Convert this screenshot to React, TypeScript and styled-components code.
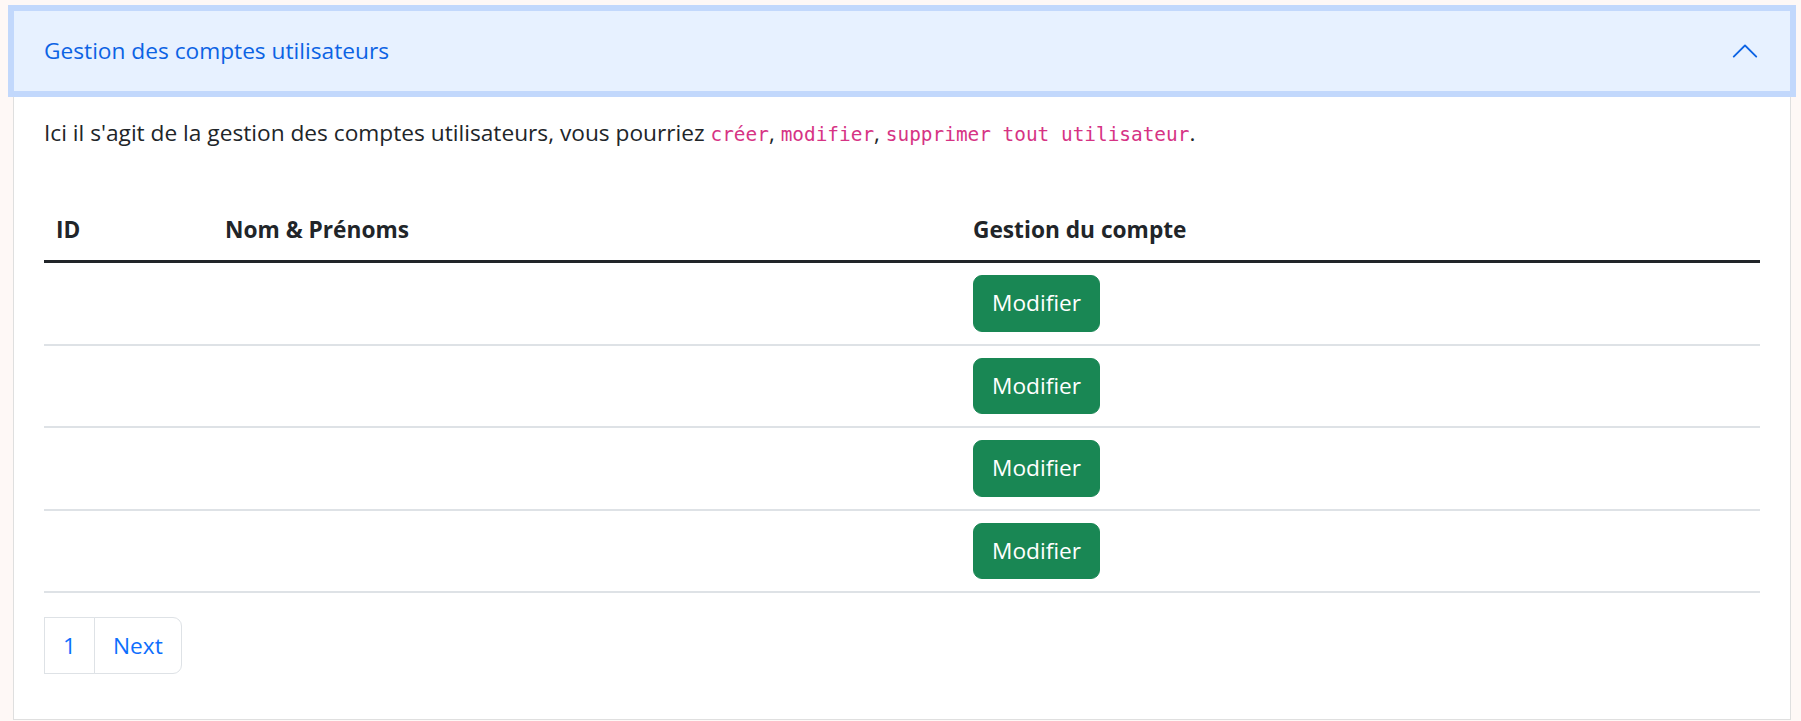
import React from 'react';
import styled, { createGlobalStyle } from 'styled-components';

const GlobalStyle = createGlobalStyle`
  * { box-sizing: border-box; }
  body {
    margin: 0;
    background: #fef8f6;
    color: #212529;
    font-family: "Open Sans", "Noto Sans", sans-serif;
    font-size: 22.7px;
    line-height: 36px;
  }
`;

const users = [1, 2, 3, 4];

const App = () => {
  return (
    <>
      <GlobalStyle />
      <St.Page>
        <St.Item>
          <St.HeaderButton type="button">
            <span>Gestion des comptes utilisateurs</span>
            <St.Chevron viewBox="0 0 16 16">
              <path
                fillRule="evenodd"
                d="M1.646 4.646a.5.5 0 0 1 .708 0L8 10.293l5.646-5.647a.5.5 0 0 1 .708.708l-6 6a.5.5 0 0 1-.708 0l-6-6a.5.5 0 0 1 0-.708z"
              />
            </St.Chevron>
          </St.HeaderButton>
          <St.Body>
            <St.Intro>
              Ici il s'agit de la gestion des comptes utilisateurs, vous pourriez{' '}
              <St.Code>créer</St.Code>, <St.Code>modifier</St.Code>,{' '}
              <St.Code>supprimer tout utilisateur</St.Code>.
            </St.Intro>
            <St.Table>
              <thead>
                <tr>
                  <St.Th $width={169}>ID</St.Th>
                  <St.Th $width={748}>Nom &amp; Prénoms</St.Th>
                  <St.Th>Gestion du compte</St.Th>
                </tr>
              </thead>
              <tbody>
                {users.map((u) => (
                  <tr key={u}>
                    <St.Td></St.Td>
                    <St.Td></St.Td>
                    <St.Td>
                      <St.EditButton type="button">Modifier</St.EditButton>
                    </St.Td>
                  </tr>
                ))}
              </tbody>
            </St.Table>
            <St.Pagination>
              <St.PageItem>
                <St.PageLink href="#">1</St.PageLink>
              </St.PageItem>
              <St.PageItem $last>
                <St.PageLink href="#">Next</St.PageLink>
              </St.PageItem>
            </St.Pagination>
          </St.Body>
        </St.Item>
      </St.Page>
    </>
  );
};

export default App;

const St = {
  Page: styled.div`
    padding: 10px 10px 0 13px;
  `,
  Item: styled.div`
    background: #fff;
    border: 1px solid rgba(0, 0, 0, 0.125);
  `,
  HeaderButton: styled.button`
    position: relative;
    z-index: 2;
    display: flex;
    align-items: center;
    width: 100%;
    padding: 25px 30px;
    border: 0;
    background: #e7f1ff;
    color: #0c63e4;
    font-family: inherit;
    font-size: 22.7px;
    line-height: 28.8px;
    text-align: left;
    box-shadow: 0 0 0 6px #c2d8fc;
    cursor: pointer;
  `,
  Chevron: styled.svg`
    flex-shrink: 0;
    width: 30px;
    height: 30px;
    margin-left: auto;
    fill: #0c63e4;
    transform: rotate(-180deg);
  `,
  Body: styled.div`
    padding: 24px 30px;
  `,
  Intro: styled.p`
    margin: 0 0 47px;
  `,
  Code: styled.code`
    font-family: "DejaVu Sans Mono", "Liberation Mono", monospace;
    font-size: 19.4px;
    color: #d63384;
  `,
  Table: styled.table`
    width: 100%;
    border-collapse: collapse;
    margin-bottom: 24px;
  `,
  Th: styled.th<{ $width?: number }>`
    width: ${(p) => (p.$width ? `${p.$width}px` : 'auto')};
    padding: 12px;
    text-align: left;
    font-weight: 700;
    border-bottom: 3px solid #212529;
  `,
  Td: styled.td`
    padding: 12px;
    border-bottom: 2px solid #dee2e6;
  `,
  EditButton: styled.button`
    display: inline-block;
    padding: 9.25px 18px;
    border: 1px solid #198754;
    border-radius: 9px;
    background: #198754;
    color: #fff;
    font-family: inherit;
    font-size: 22.7px;
    line-height: 36px;
    cursor: pointer;
  `,
  Pagination: styled.ul`
    display: flex;
    margin: 0 0 21px;
    padding: 0;
    list-style: none;
  `,
  PageItem: styled.li<{ $last?: boolean }>`
    margin-left: ${(p) => (p.$last ? '-1px' : '0')};
    & > a {
      border-radius: ${(p) => (p.$last ? '0 9px 9px 0' : '0')};
    }
  `,
  PageLink: styled.a`
    display: block;
    padding: 9.5px 18px;
    border: 1px solid #dee2e6;
    background: #fff;
    color: #0d6efd;
    text-decoration: none;
    line-height: 36px;
  `,
};
